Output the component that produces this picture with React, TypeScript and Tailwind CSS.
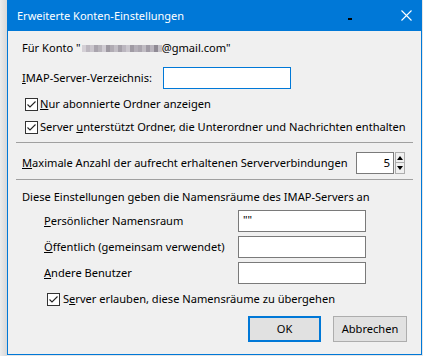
import React from "react";

function Check({ checked = true }: { checked?: boolean }) {
  return (
    <div className="w-[13px] h-[13px] border border-[#333333] bg-white flex items-center justify-center shrink-0">
      {checked && (
        <svg width="11" height="11" viewBox="0 0 11 11">
          <path d="M1.5 5.5 L4 8 L9.5 2.5" fill="none" stroke="#222" strokeWidth="1.1" />
        </svg>
      )}
    </div>
  );
}

const blocks = [
  "#d4d0d6", "#bdb8c0", "#c9c5cc", "#a9a4ad", "#b7b3ba", "#cfcbd2", "#9d98a1", "#b0abb3",
  "#c2bec5", "#a5a0a9", "#bbb6bf", "#cbc7ce", "#9f9aa3", "#b4afb8", "#aaa5ae", "#c0bcc3",
  "#a09ba5", "#b9b4bd", "#8f8a94", "#c5c1c8",
];

export default function App() {
  return (
    <div className="w-[423px] h-[356px] bg-[#e6e6e6] flex overflow-hidden font-['Noto_Sans',sans-serif] text-[11.1px] text-black">
      <div className="w-[7px] h-full bg-gradient-to-r from-[#ececec] to-[#d8d8d8]" />
      <div className="w-[415px] h-[355px] bg-[#0078d7] flex flex-col px-[1px] pb-[1px]">
        <div className="h-[31px] flex items-center pl-[9px] pr-[8px] text-white relative">
          <span className="leading-[16px] text-[11px]">Erweiterte Konten-Einstellungen</span>
          <div className="absolute left-[340px] top-[18px] w-[4px] h-[2px] bg-black" />
          <div className="ml-auto mr-[1px] w-[11px] h-[11px]">
            <svg width="11" height="11" viewBox="0 0 11 11">
              <path d="M0.5 0.5 L10.5 10.5 M10.5 0.5 L0.5 10.5" stroke="white" strokeWidth="1.1" />
            </svg>
          </div>
        </div>
        <div className="flex-1 bg-[#f0f0f0] flex flex-col pl-[14px] pr-[8px]">
          {/* Für Konto */}
          <div className="mt-[9px] h-[16px] leading-[16px] flex items-center">
            <span className="whitespace-pre">Für Konto "</span>
            <div className="flex h-[7px] ml-[1px]">
              {blocks.map((c, i) => (
                <div key={i} className="w-[4px] h-full" style={{ background: c }} />
              ))}
            </div>
            <span>@gmail.com"</span>
          </div>
          {/* IMAP */}
          <div className="mt-[11px] h-[22px] flex items-center">
            <span className="w-[141px] leading-[16px]">
              <u>I</u>MAP-Server-Verzeichnis:
            </span>
            <div className="w-[128px] h-[22px] border border-[#0078d7] bg-white" />
          </div>
          {/* Checkbox 1 */}
          <div className="mt-[7px] h-[16px] flex items-center ml-[3px] gap-[2px]">
            <Check />
            <span className="leading-[16px]">
              <u>N</u>ur abonnierte Ordner anzeigen
            </span>
          </div>
          <div className="mt-[7px] h-[16px] flex items-center ml-[3px] gap-[2px]">
            <Check />
            <span className="leading-[16px] whitespace-nowrap">
              Server <u>u</u>nterstützt Ordner, die Unterordner und Nachrichten enthalten
            </span>
          </div>
          <div className="mt-[7px] h-[1px] bg-[#a0a0a0] ml-[-6px]" />
          {/* Max */}
          <div className="mt-[9px] h-[22px] flex items-center">
            <span className="w-[334px] leading-[16px] whitespace-nowrap">
              <u>M</u>aximale Anzahl der aufrecht erhaltenen Serververbindungen
            </span>
            <div className="w-[38px] h-[22px] border border-[#7a7a7a] bg-white flex items-center justify-end pr-[3px] leading-[16px] text-[11.5px]">
              5
            </div>
            <div className="ml-[1px] w-[10px] h-[22px] flex flex-col">
              <div className="h-[11px] border border-[#adadad] bg-[#f0f0f0] flex items-center justify-center">
                <svg width="6" height="4" viewBox="0 0 6 4"><path d="M0 4 L3 0 L6 4 Z" fill="#000" /></svg>
              </div>
              <div className="h-[11px] border border-t-0 border-[#adadad] bg-[#f0f0f0] flex items-center justify-center">
                <svg width="6" height="4" viewBox="0 0 6 4"><path d="M0 0 L3 4 L6 0 Z" fill="#000" /></svg>
              </div>
            </div>
          </div>
          <div className="mt-[5px] h-[1px] bg-[#a0a0a0] ml-[-6px]" />
          {/* Diese */}
          <div className="mt-[9px] h-[16px] leading-[16px]">
            Diese Einstellungen geben die Namensräume des IMAP-Servers an
          </div>
          <div className="mt-[5px] flex flex-col gap-[4px] pl-[22px]">
            <div className="h-[22px] flex items-center">
              <span className="w-[194px] leading-[16px]">
                <u>P</u>ersönlicher Namensraum
              </span>
              <div className="w-[128px] h-[22px] border border-[#7a7a7a] bg-white pl-[4px] leading-[18px]">""</div>
            </div>
            <div className="h-[22px] flex items-center">
              <span className="w-[194px] leading-[16px] whitespace-nowrap">
                <u>Ö</u>ffentlich (gemeinsam verwendet)
              </span>
              <div className="w-[128px] h-[22px] border border-[#7a7a7a] bg-white" />
            </div>
            <div className="h-[22px] flex items-center">
              <span className="w-[194px] leading-[16px]">
                <u>A</u>ndere Benutzer
              </span>
              <div className="w-[128px] h-[22px] border border-[#7a7a7a] bg-white" />
            </div>
          </div>
          <div className="mt-[7px] h-[16px] flex items-center ml-[25px] gap-[3px]">
            <Check />
            <span className="leading-[16px]">
              S<u>e</u>rver erlauben, diese Namensräume zu übergehen
            </span>
          </div>
          {/* Buttons */}
          <div className="mt-[9px] flex justify-end gap-[12px] mr-[6px]">
            <button className="w-[73px] h-[26px] border-2 border-[#0078d7] bg-[#e1e1e1] leading-[16px]">OK</button>
            <button className="w-[74px] h-[26px] border border-[#adadad] bg-[#e1e1e1] leading-[16px]">Abbrechen</button>
          </div>
        </div>
      </div>
    </div>
  );
}
